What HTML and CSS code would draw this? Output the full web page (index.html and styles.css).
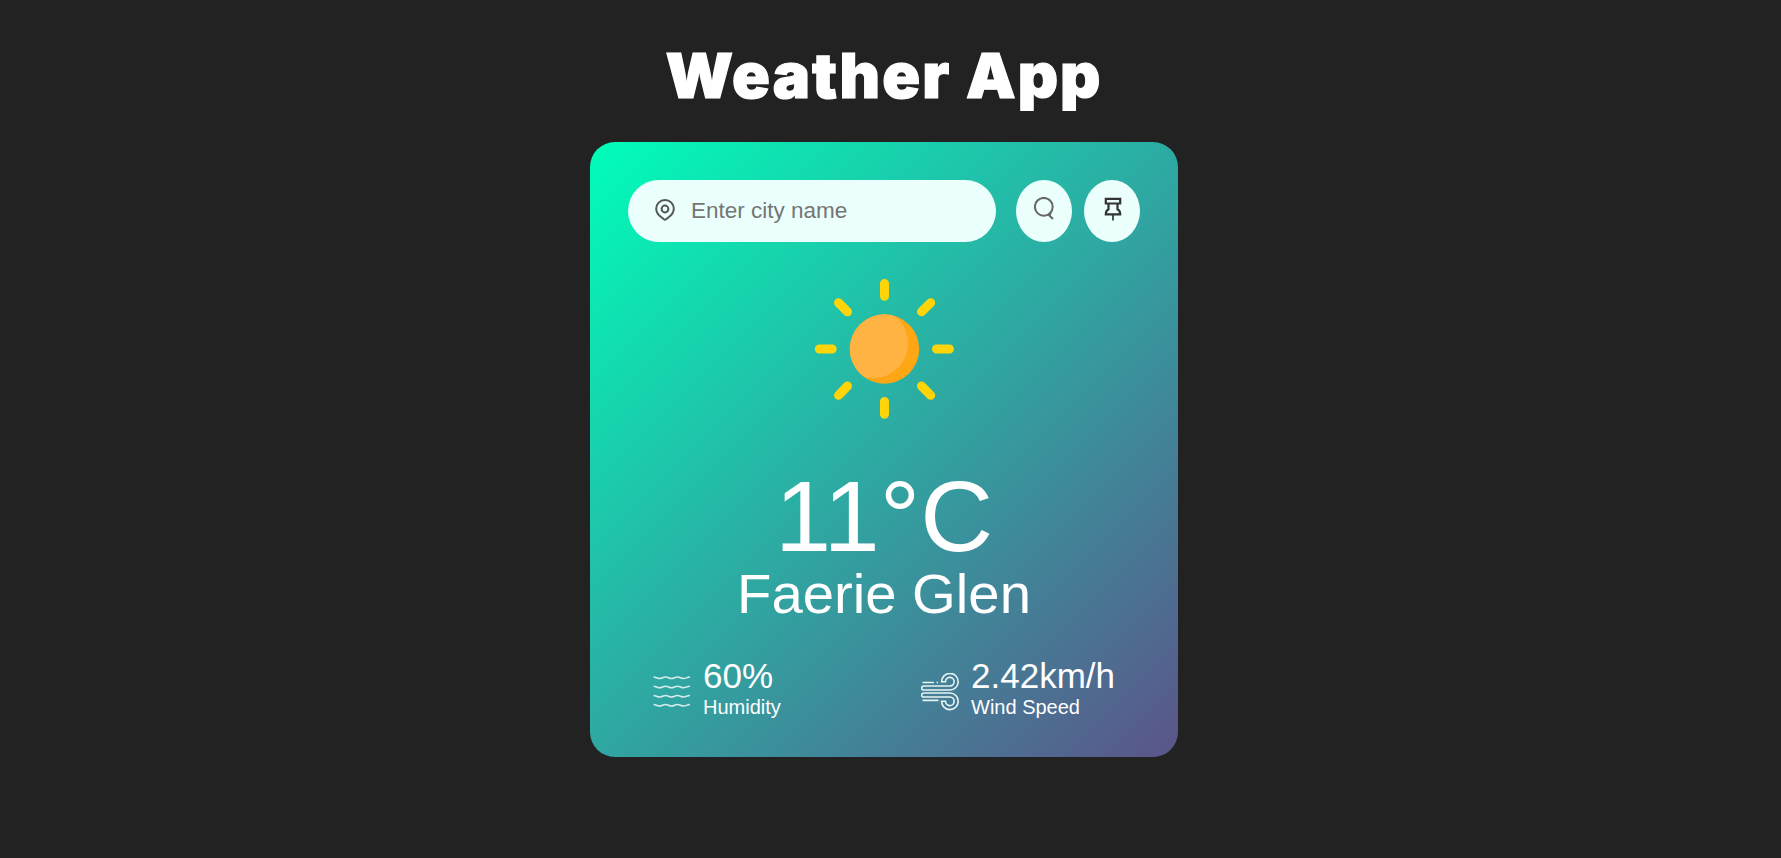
FILE: index.html
```html
<!DOCTYPE html>
<html lang="en">
<head>
<meta charset="utf-8">
<title>Weather App</title>
<link rel="stylesheet" href="styles.css">
</head>
<body>
<main class="page">
  <h1 class="title">Weather App</h1>
  <section class="card">
    <form class="search">
      <label class="field">
        <svg class="pin" viewBox="0 0 20 22"><path d="M10 1.1C4.900 1.100 1.200 4.900 1.200 9.700c0 3.700 2.100 6.300 5.200 8.500l2.500 2c.7.6 1.500.6 2.200 0l2.500-2c3.100-2.200 5.200-4.800 5.200-8.500C18.800 4.900 15.100 1.100 10 1.100z"/><circle cx="10" cy="10" r="3.400"/></svg>
        <input class="city-input" type="text" placeholder="Enter city name" spellcheck="false">
      </label>
      <button class="round search-button" type="button" aria-label="Search"><svg class="lens" viewBox="0 0 20 24"><circle cx="9.800" cy="9.800" r="8.900"/><path d="M14 17.200L19 22M16.600 15L15.800 18.500"/></svg></button>
      <button class="round" type="button" aria-label="Use location"><svg class="tack" viewBox="0 0 18 24"><path d="M1.800 1.900h14.400v4.600H1.800zM4.500 6.500v5.700Q1.800 13.500 1.800 17.400h14.400Q16.200 13.500 13.500 12.200V6.500"/><path class="needle" d="M9 17.500v6"/></svg></button>
    </form>
    <svg class="sun" viewBox="0 0 160 160">
      <defs><clipPath id="disc"><circle cx="80.500" cy="80" r="34.700"/></clipPath></defs>
      <circle cx="80.500" cy="80" r="34.700" fill="#ffa614"/>
      <circle cx="69.500" cy="74.500" r="34.700" fill="#ffb342" clip-path="url(#disc)"/>
      <path class="rays" d="M80.500 14.500v12.800M80.500 132.500v12.800M15.300 80h12.900M132.500 80h12.900M34.500 33.700l9 9M117.500 117l9.200 9.300M126.700 33.700l-9.200 9M43.500 117l-9 9.300"/>
    </svg>
    <h2 class="temp">11°C</h2>
    <h3 class="city">Faerie Glen</h3>
    <div class="details">
      <div class="detail">
        <svg class="icon waves" viewBox="0 0 38 38">
          <path d="M.5 4c2.500 0 3.500 1.600 6 1.600s3.500-1.600 6-1.600 3.500 1.600 6 1.600 3.500-1.600 6-1.600 3.500 1.600 6 1.600 3.500-1.600 6.500-1.600"/>
          <path d="M.5 13.200c2.500 0 3.500 1.600 6 1.600s3.500-1.600 6-1.600 3.500 1.600 6 1.600 3.500-1.600 6-1.600 3.500 1.600 6 1.600 3.500-1.600 6.500-1.600"/>
          <path d="M.5 22.400c2.500 0 3.500 1.600 6 1.600s3.500-1.600 6-1.600 3.500 1.600 6 1.600 3.500-1.600 6-1.600 3.500 1.600 6 1.600 3.500-1.600 6.500-1.600"/>
          <path d="M.5 31.500c2.500 0 3.500 1.600 6 1.600s3.500-1.600 6-1.600 3.500 1.600 6 1.600 3.500-1.600 6-1.600 3.500 1.600 6 1.600 3.500-1.600 6.500-1.600"/>
        </svg>
        <div><p class="value">60%</p><p class="label">Humidity</p></div>
      </div>
      <div class="detail">
        <svg class="icon wind" viewBox="0 0 38 38"><path d="M1.500 9.500H13M15.500 9.500h1.500M2.700 17H29a8.300 8.300 0 1 0-8.400-8.200h3.900a4.300 4.300 0 1 1 4.500 4.200H2.700a2 2 0 0 0 0 4M2.700 20H29a8.300 8.300 0 1 1-8.400 8.200h3.900a4.300 4.300 0 1 0 4.500-4.200H2.700a2 2 0 0 1 0-4M1.500 27.400H17.500"/></svg>
        <div><p class="value">2.42km/h</p><p class="label">Wind Speed</p></div>
      </div>
    </div>
  </section>
</main>
</body>
</html>
```
FILE: styles.css
```css
* { margin: 0; padding: 0; box-sizing: border-box; font-family: Arial, "Liberation Sans", sans-serif; }
body { background: #222; color: #fff; min-height: 858px; overflow: hidden; }
.page { width: 1768px; padding-top: 31px; display: flex; flex-direction: column; align-items: center; }
.title { height: 88px; margin-bottom: 23px; line-height: 88px; font-family: Inter, sans-serif; font-weight: 900; font-size: 62.5px; white-space: nowrap; letter-spacing: 2.1px; -webkit-text-stroke: 1.2px #fff; }
.card { width: 588px; height: 615px; padding: 38px; border-radius: 25px; background: linear-gradient(135deg, #00feba, #5b548a); display: flex; flex-direction: column; align-items: center; }
.search { width: 100%; height: 62px; flex: none; display: flex; }
.field { width: 368px; height: 62px; border-radius: 31px; background: #ebfffc; display: flex; align-items: center; padding-left: 27px; margin-right: 20px; }
.pin { width: 20px; height: 22px; margin-right: 16px; margin-bottom: 2px; fill: none; stroke: #555; stroke-width: 2; }
.city-input { width: 270px; height: 40px; margin-bottom: 1px; border: 0; outline: 0; background: none; font-size: 22.5px; color: #555; }
.city-input::placeholder { color: #757575; }
.round { width: 56px; height: 62px; border: 0; border-radius: 50%; background: #ebfffc; display: flex; justify-content: center; align-items: flex-start; padding-top: 17px; }
.search-button { margin-right: 12px; }
.lens { width: 20px; height: 24px; fill: none; stroke: #666; stroke-width: 2; }
.tack { width: 18px; height: 24px; margin-left: 1px; fill: none; stroke: #333; stroke-width: 2.2; }
.needle { stroke-width: 1.7; }
.sun { width: 160px; height: 160px; flex: none; margin-top: 27px; }
.rays { fill: none; stroke: #ffd509; stroke-width: 9; stroke-linecap: round; }
.temp { margin-top: 36px; font-size: 101px; line-height: 102px; font-weight: 500; }
.city { font-size: 56.25px; line-height: 53px; font-weight: 400; }
.details { width: 100%; margin-top: 36px; padding: 0 25px; display: flex; justify-content: space-between; }
.detail { display: flex; align-items: center; gap: 12px; }
.icon { width: 38px; height: 38px; margin-top: 8px; fill: none; stroke: #e8f4f5; }
.waves { stroke-width: 1.5; opacity: .9; }
.wind { stroke-width: 1.6; }
.value { font-size: 35px; line-height: 40px; }
.label { font-size: 20px; line-height: 23px; }
```
